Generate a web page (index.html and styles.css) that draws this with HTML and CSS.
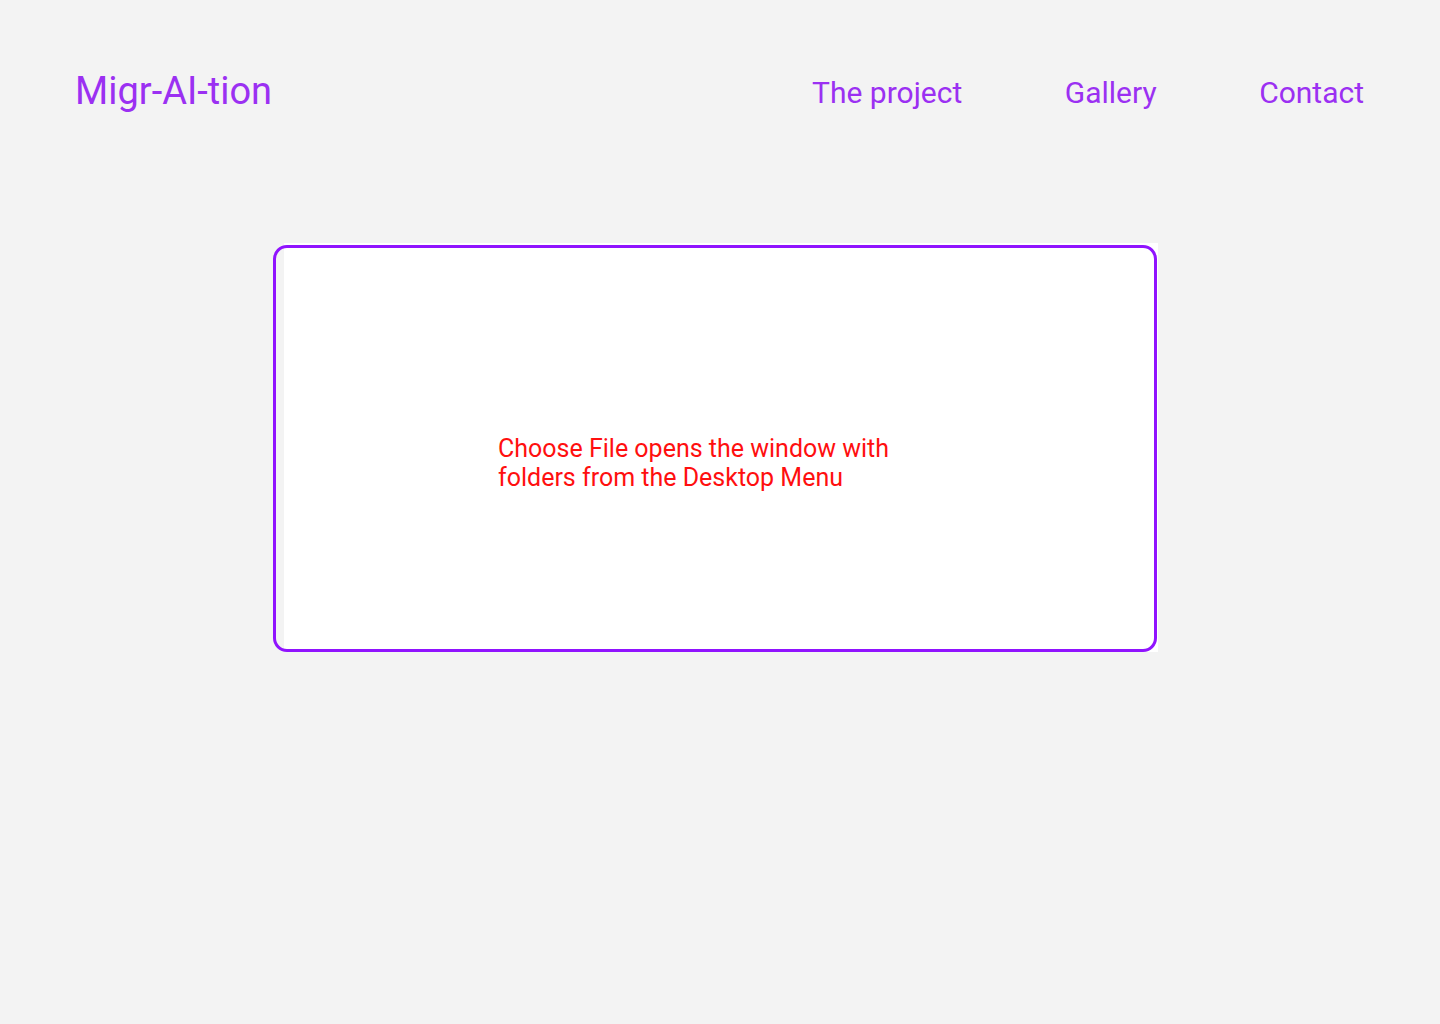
FILE: index.html
```html
<!DOCTYPE html>
<html lang="en">
<head>
<meta charset="utf-8">
<title>Migr-AI-tion</title>
<link rel="stylesheet" href="styles.css">
</head>
<body>
<header class="header">
  <div class="logo">Migr-AI-tion</div>
  <nav class="nav">
    <a class="nav-link" href="#">The project</a>
    <a class="nav-link" href="#">Gallery</a>
    <a class="nav-link" href="#">Contact</a>
  </nav>
</header>
<main class="main">
  <div class="card-wrap">
    <div class="card">
      <p class="note">Choose File opens the window with<br>folders from the Desktop Menu</p>
    </div>
  </div>
</main>
</body>
</html>
```

FILE: styles.css
```css
html, body {
  margin: 0;
  padding: 0;
}
body {
  background: #f3f3f3;
  font-family: Roboto, "Liberation Sans", sans-serif;
  width: 1440px;
  height: 1024px;
  overflow: hidden;
}
.header {
  display: flex;
  justify-content: space-between;
  align-items: center;
  padding: 67px 76px 0 75px;
  height: 48px;
}
.logo {
  color: #9b30f2;
  font-size: 38px;
  line-height: 48px;
}
.nav {
  display: flex;
  gap: 102.5px;
  margin-top: 4px;
}
.nav-link {
  color: #9b30f2;
  font-size: 30px;
  line-height: 40px;
  text-decoration: none;
}
.main {
  padding: 130px 0 0 273px;
}
.card-wrap {
  position: relative;
  width: 884px;
  height: 407px;
}
.card-wrap::before {
  content: "";
  position: absolute;
  left: 11px;
  top: -2px;
  width: 874px;
  height: 409px;
  background: #ffffff;
}
.card {
  position: relative;
  box-sizing: border-box;
  width: 884px;
  height: 407px;
  border: 3px solid #9013fe;
  border-radius: 14px;
  padding: 186px 0 0 222px;
}
.note {
  margin: 0;
  color: #ff0f0f;
  font-size: 25px;
  line-height: 29px;
}
```
